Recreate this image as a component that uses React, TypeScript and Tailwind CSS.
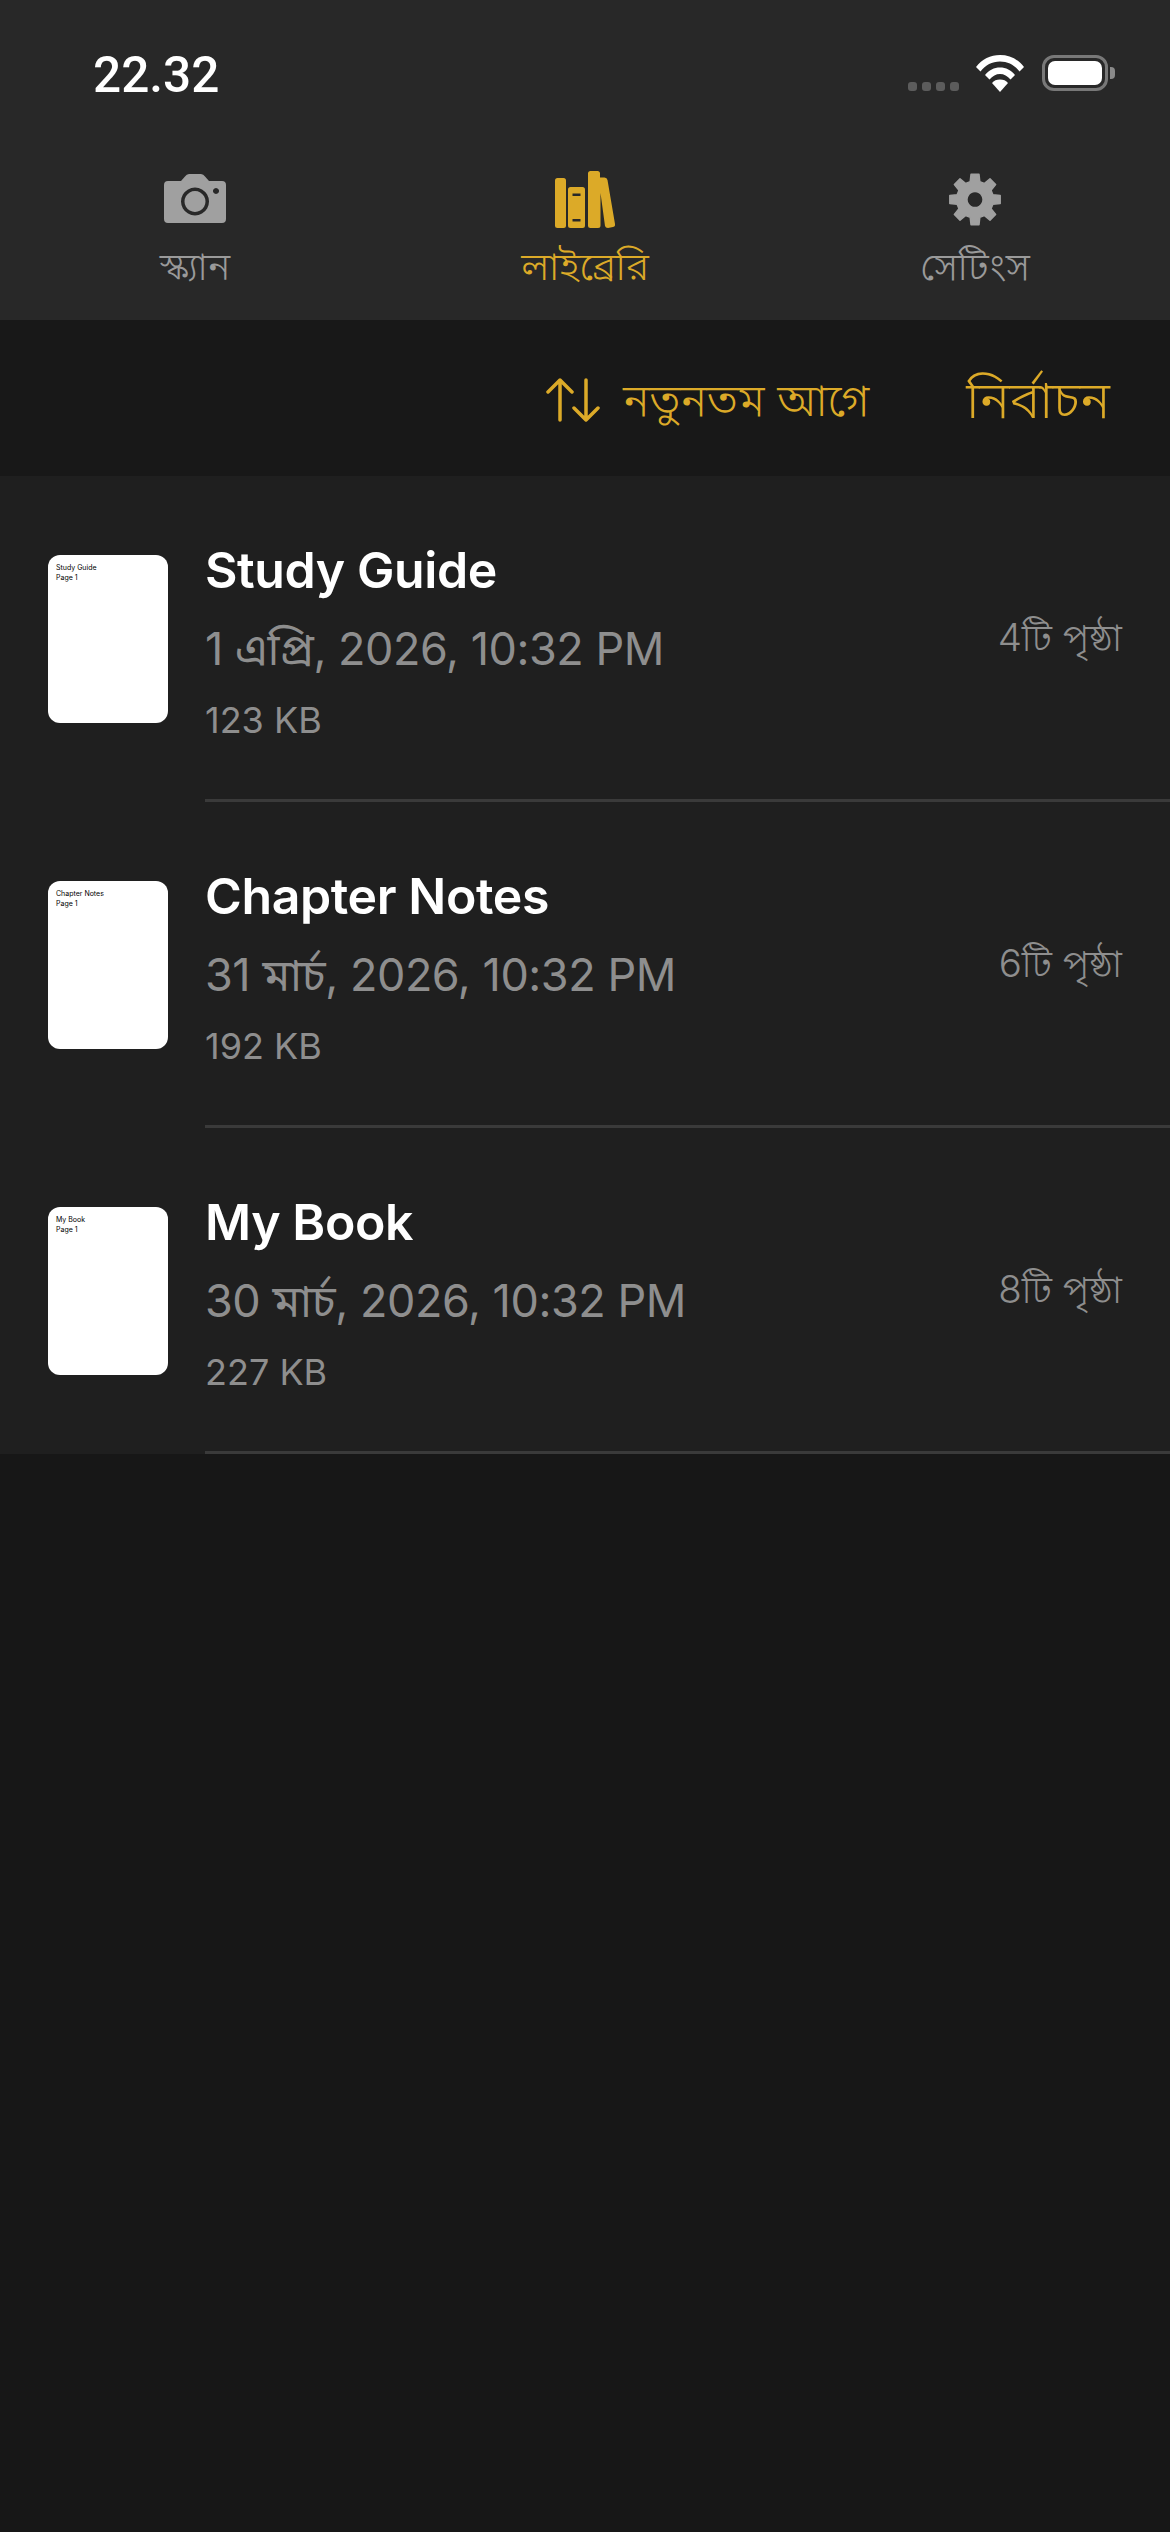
const rows = [
  { name: "Study Guide", date: "1 এপ্রি, 2026, 10:32 PM", size: "123 KB", pages: "4টি পৃষ্ঠা" },
  { name: "Chapter Notes", date: "31 মার্চ, 2026, 10:32 PM", size: "192 KB", pages: "6টি পৃষ্ঠা" },
  { name: "My Book", date: "30 মার্চ, 2026, 10:32 PM", size: "227 KB", pages: "8টি পৃষ্ঠা" },
];

function Camera() {
  return (
    <svg width="62" height="49" viewBox="0 0 62 49">
      <path fillRule="evenodd" fill="#a0a0a0" d="M4 7h13l4-4.500Q22.500 0 25 0h12q2.500 0 4 2.500L45 7h13q4 0 4 4v34q0 4-4 4H4q-4 0-4-4V11q0-4 4-4Zm27 6.500a14 14 0 1 0 .01 0Zm0 3.500a10.500 10.500 0 1 1-.01 0ZM52 14a3 3 0 1 0 .01 0Z" />
    </svg>
  );
}

function Books() {
  return (
    <svg width="60" height="57" viewBox="0 0 60 57">
      <rect x="0" y="7" width="11" height="50" rx="2.500" fill="#dcaa28" />
      <path fillRule="evenodd" fill="#dcaa28" d="M15.500 16h12q2.500 0 2.500 2.500v36q0 2.500-2.500 2.500h-12q-2.500 0-2.500-2.500v-36q0-2.500 2.500-2.500Zm2 6.500v2.500h8v-2.500Zm0 25.500v2.500h8v-2.500Z" />
      <path fill="#dcaa28" d="M35.500 0h7Q45 0 45 2.500V6.500h4.500q2.500 0 3 2.500L60 53q.5 2.500-2 3l-5 1q-2.500 0-3-2L45.500 22V54.500q0 2.500-2.500 2.500h-7.500q-2.500 0-2.500-2.500v-52Q33 0 35.500 0Z" />
    </svg>
  );
}

function Gear() {
  const teeth = 8;
  const pts: string[] = [];
  for (let i = 0; i < teeth; i++) {
    const a = (i * 360) / teeth - 90;
    const p = (deg: number, r: number) => {
      const t = (deg * Math.PI) / 180;
      return `${(26 + r * Math.cos(t)).toFixed(2)} ${(26.5 + r * Math.sin(t)).toFixed(2)}`;
    };
    pts.push(p(a - 9, 25.5), p(a + 9, 25.5), p(a + 15, 18.5), p(a + 30, 18.5));
  }
  return (
    <svg width="52" height="53" viewBox="0 0 52 53">
      <path
        fill="#a0a0a0"
        stroke="#a0a0a0"
        strokeWidth="1.500"
        strokeLinejoin="round"
        fillRule="evenodd"
        d={`M${pts.join("L")}Z M26 18.500a8 8 0 1 0 .01 0Z`}
      />
    </svg>
  );
}

function Sort() {
  return (
    <svg width="54" height="44" viewBox="0 0 54 44" fill="none" stroke="#dcaa28" strokeWidth="3.500" strokeLinecap="round" strokeLinejoin="round">
      <path d="M14 42V2M2 14 14 2l12 12" />
      <path d="M40 2v40M28 30l12 12 12-12" />
    </svg>
  );
}

function Wifi() {
  return (
    <svg width="48" height="37" viewBox="0 0 48 37">
      <path fill="#fff" d="M24 0C14.500 0 6 4 0 12l4.500 4.500C9.500 10 16 6.500 24 6.500S38.500 10 43.500 16.500L48 12C42 4 33.500 0 24 0Z" />
      <path fill="#fff" d="M24 12.500c-6 0-11 2.500-15 7.500l4.500 4.500c3-3.500 6.500-5.500 10.500-5.500s7.500 2 10.500 5.500L39 20c-4-5-9-7.500-15-7.500Z" />
      <path fill="#fff" d="M24 24.500c-3.500 0-6 1-8 3.500l8 9 8-9c-2-2.500-4.500-3.500-8-3.500Z" />
    </svg>
  );
}

export default function App() {
  return (
    <div className="w-[1170px] h-[2532px] bg-[#171717] flex flex-col font-['Inter','Noto_Sans_Bengali','Noto_Sans',sans-serif]">
      <div className="bg-[#282828] h-[320px] flex flex-col shrink-0">
        <div className="h-[132px] flex items-start justify-between pl-[93px] pr-[55px] pt-[50px] shrink-0">
          <span className="font-['Roboto',sans-serif] text-white text-[49.500px] leading-[50px] font-medium">22.32</span>
          <div className="flex items-start gap-[17px] pt-[5px]">
            <div className="flex gap-[5px] mt-[27px]">
              <span className="w-[9px] h-[9px] rounded-[3px] bg-[#5c5c5c]" />
              <span className="w-[9px] h-[9px] rounded-[3px] bg-[#5c5c5c]" />
              <span className="w-[9px] h-[9px] rounded-[3px] bg-[#5c5c5c]" />
              <span className="w-[9px] h-[9px] rounded-[3px] bg-[#5c5c5c]" />
            </div>
            <Wifi />
            <div className="flex items-center gap-[2px] ml-[1px]">
              <div className="w-[66px] h-[36px] rounded-[12px] border-[3px] border-[#787878] p-[3px]">
                <div className="w-full h-full rounded-[7px] bg-white" />
              </div>
              <span className="w-[5px] h-[12px] rounded-r-[4px] bg-[#8a8a8a]" />
            </div>
          </div>
        </div>
        <div className="grid grid-cols-3 flex-1">
          <div className="flex flex-col items-center">
            <div className="h-[96px] flex items-end pb-[5px]"><Camera /></div>
            <span className="mt-[14px] text-[39px] leading-[48px] font-light text-[#9a9a9a]">স্ক্যান</span>
          </div>
          <div className="flex flex-col items-center">
            <div className="h-[96px] flex items-end"><Books /></div>
            <span className="mt-[14px] text-[39.500px] leading-[48px] font-light text-[#dcaa28]">লাইব্রেরি</span>
          </div>
          <div className="flex flex-col items-center">
            <div className="h-[96px] flex items-end pb-[2px]"><Gear /></div>
            <span className="mt-[14px] text-[39.500px] leading-[48px] font-light text-[#9a9a9a]">সেটিংস</span>
          </div>
        </div>
      </div>
      <div className="h-[156px] bg-[#181818] flex items-center justify-end pr-[60px] shrink-0 pt-[3px]">
        <Sort />
        <span className="ml-[23px] text-[45px] font-light text-[#dcaa28]">নতুনতম আগে</span>
        <span className="ml-[97px] text-[52px] font-light text-[#dcaa28]">নির্বাচন</span>
      </div>
      <div className="bg-[#1f1f1f]">
        {rows.map((r) => (
          <div key={r.name} className="h-[326px] pl-[48px] flex items-center">
            <div className="w-[120px] h-[168px] bg-white rounded-[12px] shrink-0 px-[8px] pt-[8px] text-[7px] leading-[10px] text-black">
              <div>{r.name}</div>
              <div>Page 1</div>
            </div>
            <div className="ml-[37px] flex-1 h-full border-b-[3px] border-[#3a3a3a] pr-[48px] flex items-center justify-between">
              <div className="flex flex-col pt-[7px]">
                <span className="text-[50px] leading-[60px] font-semibold tracking-[-0.4px] text-white">{r.name}</span>
                <span className="mt-[21px] text-[45px] leading-[56px] tracking-[-0.45px] text-[#8e8e8e]">{r.date}</span>
                <span className="mt-[21px] text-[36px] leading-[44px] text-[#8e8e8e]">{r.size}</span>
              </div>
              <span className="text-[38.500px] text-[#8e8e8e] font-light">{r.pages}</span>
            </div>
          </div>
        ))}
      </div>
    </div>
  );
}
